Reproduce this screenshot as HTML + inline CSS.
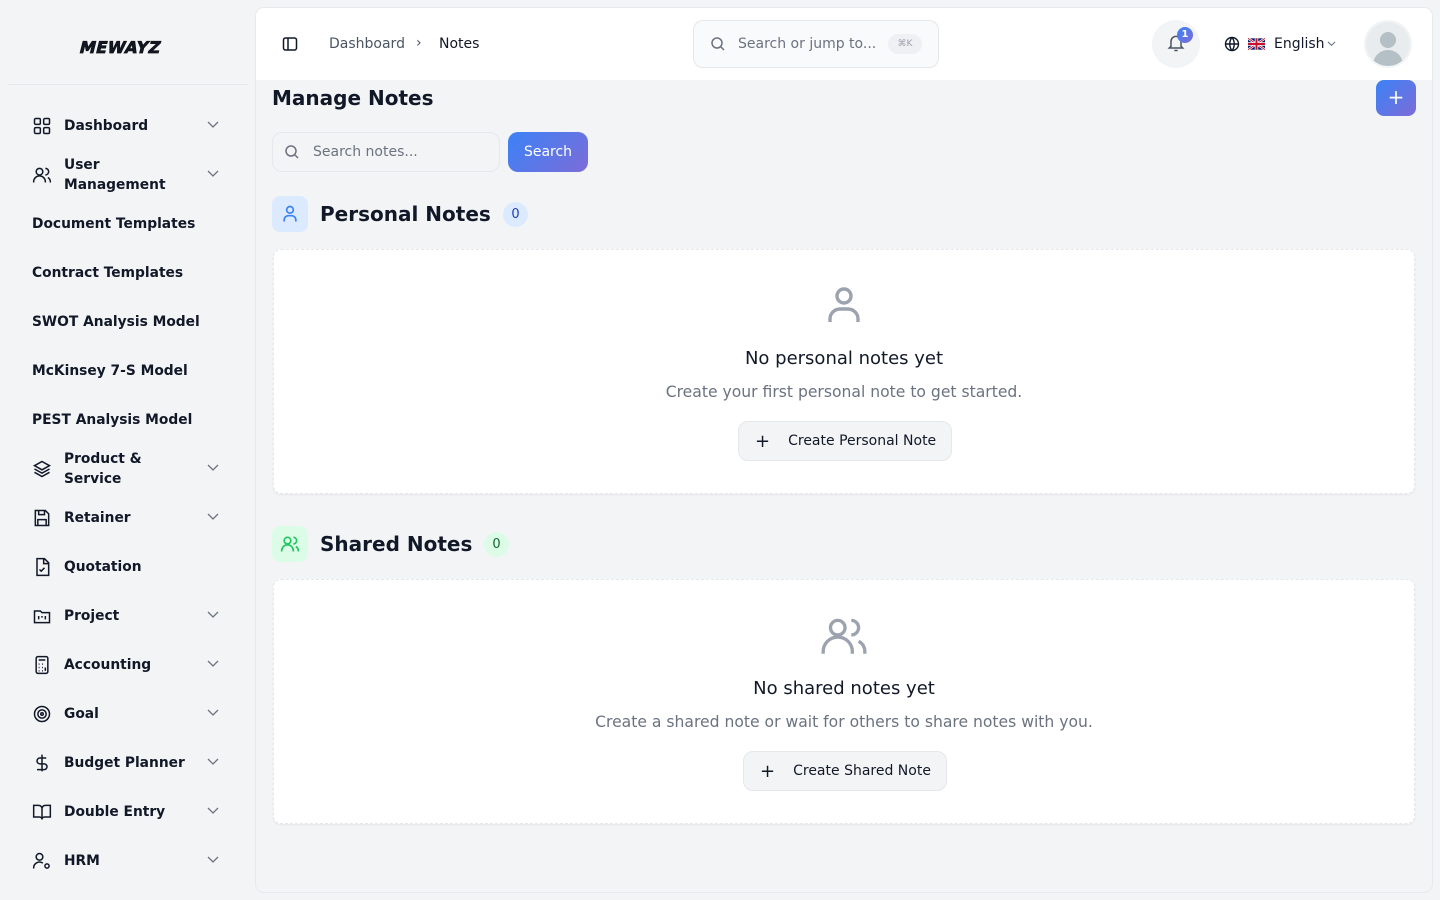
<!DOCTYPE html><html><head><meta charset="utf-8"><style>
*{box-sizing:border-box;margin:0;padding:0}
body{width:1440px;height:900px;background:#f3f4f6;font-family:"DejaVu Sans",sans-serif;color:#111827;position:relative;overflow:hidden}
.sb{position:absolute;left:0;top:0;width:256px;height:900px}
.logo{position:absolute;left:80px;top:38px;font:bold 16px "DejaVu Sans",sans-serif;letter-spacing:0.5px;transform:skewX(-14deg);-webkit-text-stroke:0.8px #111}
.hr{position:absolute;left:8px;top:84px;width:240px;height:1px;background:#e5e7eb}
.it{position:absolute;left:32px;font-size:13.8px;font-weight:bold;color:#111827;display:flex;align-items:center;line-height:20px}
.it svg{width:20px;height:20px;margin-right:12px;flex:none}
.chev{position:absolute;left:206px;width:14px;height:14px}
.main{position:absolute;left:256px;top:8px;width:1176px;height:884px;background:#f3f4f6;border-radius:8px;box-shadow:0 0 0 1px #e8e9ec}
.hdr{position:absolute;left:256px;top:8px;width:1176px;height:72px;background:#fff;border-radius:8px 8px 0 0}
.abs{position:absolute}
.card{position:absolute;left:273px;width:1142px;height:245px;background:#fff;border:1px dashed #e5e7eb;border-radius:8px;box-shadow:0 1px 2px rgba(0,0,0,.06)}
.ct{position:absolute;width:100%;text-align:center}
.btn{position:absolute;height:40px;border:1px solid #e5e7eb;background:#f3f4f6;border-radius:10px;font-size:14px;display:flex;align-items:center;padding-left:16px;color:#111827}
</style></head><body>
<div class="sb">
<div class="logo">MEWAYZ</div>
<div class="hr"></div>
<div class="it" style="top:116px"><svg viewBox="0 0 24 24" fill="none" stroke="#111827" stroke-width="1.8"><rect x="3" y="3" width="7" height="7" rx="1.5"/><rect x="14" y="3" width="7" height="7" rx="1.5"/><rect x="3" y="14" width="7" height="7" rx="1.5"/><rect x="14" y="14" width="7" height="7" rx="1.5"/></svg>Dashboard</div>
<div class="it" style="top:155px"><svg viewBox="0 0 24 24" fill="none" stroke="#111827" stroke-width="1.8"><circle cx="9" cy="8" r="4"/><path d="M2 21v-1a7 7 0 0114 0v1M16 4a4 4 0 010 8M22 21v-1a6 6 0 00-3-5"/></svg>User<br>Management</div>
<div class="it" style="top:214px">Document Templates</div>
<div class="it" style="top:263px">Contract Templates</div>
<div class="it" style="top:312px">SWOT Analysis Model</div>
<div class="it" style="top:361px">McKinsey 7-S Model</div>
<div class="it" style="top:410px">PEST Analysis Model</div>
<div class="it" style="top:449px"><svg viewBox="0 0 24 24" fill="none" stroke="#111827" stroke-width="1.8"><path d="M12 3l9 5-9 5-9-5z M3 12l9 5 9-5 M3 16l9 5 9-5"/></svg>Product &amp;<br>Service</div>
<div class="it" style="top:508px"><svg viewBox="0 0 24 24" fill="none" stroke="#111827" stroke-width="1.8"><path d="M5 3h11l4 4v14H4V3z M8 3v5h7V3 M7 21v-7h10v7"/></svg>Retainer</div>
<div class="it" style="top:557px"><svg viewBox="0 0 24 24" fill="none" stroke="#111827" stroke-width="1.8"><path d="M6 2h9l5 5v15H6z M14 2v6h6 M9 15l2 2 4-4"/></svg>Quotation</div>
<div class="it" style="top:606px"><svg viewBox="0 0 24 24" fill="none" stroke="#111827" stroke-width="1.8"><path d="M3 6h7l2 2h9v12H3z M8 12v4 M12 12v2 M16 12v4"/></svg>Project</div>
<div class="it" style="top:655px"><svg viewBox="0 0 24 24" fill="none" stroke="#111827" stroke-width="1.8"><rect x="5" y="2" width="14" height="20" rx="2"/><path d="M8 6h8M8 11h1M12 11h1M16 11h0M8 15h1M12 15h1M8 19h1M12 19h1M16 15v4"/></svg>Accounting</div>
<div class="it" style="top:704px"><svg viewBox="0 0 24 24" fill="none" stroke="#111827" stroke-width="1.8"><circle cx="12" cy="12" r="9"/><circle cx="12" cy="12" r="5"/><circle cx="12" cy="12" r="1.5"/></svg>Goal</div>
<div class="it" style="top:753px"><svg viewBox="0 0 24 24" fill="none" stroke="#111827" stroke-width="1.8"><path d="M12 2v20M17 6H9.5a3.5 3.5 0 000 7h5a3.5 3.5 0 010 7H6"/></svg>Budget Planner</div>
<div class="it" style="top:802px"><svg viewBox="0 0 24 24" fill="none" stroke="#111827" stroke-width="1.8"><path d="M2 4h6a4 4 0 014 4v13a3 3 0 00-3-3H2z M22 4h-6a4 4 0 00-4 4v13a3 3 0 013-3h7z"/></svg>Double Entry</div>
<div class="it" style="top:851px"><svg viewBox="0 0 24 24" fill="none" stroke="#111827" stroke-width="1.8"><circle cx="9" cy="7" r="4"/><path d="M2 21v-1a7 7 0 0111-5.5"/><circle cx="18" cy="18" r="2.5"/></svg>HRM</div>
<svg class="chev" style="top:117px" viewBox="0 0 14 14" fill="none" stroke="#6b7280" stroke-width="1.3"><path d="M2 5l5 5 5-5"/></svg>
<svg class="chev" style="top:166px" viewBox="0 0 14 14" fill="none" stroke="#6b7280" stroke-width="1.3"><path d="M2 5l5 5 5-5"/></svg>
<svg class="chev" style="top:460px" viewBox="0 0 14 14" fill="none" stroke="#6b7280" stroke-width="1.3"><path d="M2 5l5 5 5-5"/></svg>
<svg class="chev" style="top:509px" viewBox="0 0 14 14" fill="none" stroke="#6b7280" stroke-width="1.3"><path d="M2 5l5 5 5-5"/></svg>
<svg class="chev" style="top:607px" viewBox="0 0 14 14" fill="none" stroke="#6b7280" stroke-width="1.3"><path d="M2 5l5 5 5-5"/></svg>
<svg class="chev" style="top:656px" viewBox="0 0 14 14" fill="none" stroke="#6b7280" stroke-width="1.3"><path d="M2 5l5 5 5-5"/></svg>
<svg class="chev" style="top:705px" viewBox="0 0 14 14" fill="none" stroke="#6b7280" stroke-width="1.3"><path d="M2 5l5 5 5-5"/></svg>
<svg class="chev" style="top:754px" viewBox="0 0 14 14" fill="none" stroke="#6b7280" stroke-width="1.3"><path d="M2 5l5 5 5-5"/></svg>
<svg class="chev" style="top:803px" viewBox="0 0 14 14" fill="none" stroke="#6b7280" stroke-width="1.3"><path d="M2 5l5 5 5-5"/></svg>
<svg class="chev" style="top:852px" viewBox="0 0 14 14" fill="none" stroke="#6b7280" stroke-width="1.3"><path d="M2 5l5 5 5-5"/></svg>
</div>
<div class="main"></div>
<div class="hdr"></div>
<svg class="abs" style="left:282px;top:36px" width="16" height="16" viewBox="0 0 16 16" fill="none" stroke="#111827" stroke-width="1.5"><rect x="1.5" y="2" width="13" height="12" rx="2"/><path d="M6 2v12"/></svg>
<div class="abs" style="left:329px;top:36px;font-size:14px;color:#4b5563">Dashboard</div>
<div class="abs" style="left:416px;top:35px;font-size:14px;color:#4b5563">›</div>
<div class="abs" style="left:439px;top:36px;font-size:14px;color:#111827">Notes</div>
<div class="abs" style="left:693px;top:20px;width:246px;height:48px;border:1px solid #e5e7eb;border-radius:10px;background:#f9fafb"></div>
<svg class="abs" style="left:710px;top:36px" width="16" height="16" viewBox="0 0 16 16" fill="none" stroke="#6b7280" stroke-width="1.5"><circle cx="7" cy="7" r="5"/><path d="M11 11l3 3"/></svg>
<div class="abs" style="left:738px;top:36px;font-size:14px;color:#6b7280">Search or jump to...</div>
<div class="abs" style="left:888px;top:34px;width:34px;height:20px;border-radius:10px;background:#eef0f3;font-size:9px;color:#9ca3af;text-align:center;line-height:20px">⌘K</div>
<div class="abs" style="left:1152px;top:20px;width:48px;height:48px;border-radius:50%;background:#f3f4f6"></div>
<svg class="abs" style="left:1166px;top:33px" width="20" height="20" viewBox="0 0 24 24" fill="none" stroke="#4b5563" stroke-width="1.8"><path d="M6 16V10a6 6 0 0112 0v6l2 2H4z M10 21h4"/></svg>
<div class="abs" style="left:1177px;top:27px;width:16px;height:16px;border-radius:50%;background:linear-gradient(135deg,#3b82f6,#7c6cd8);color:#fff;font-size:10px;font-weight:bold;text-align:center;line-height:16px">1</div>
<svg class="abs" style="left:1224px;top:36px" width="16" height="16" viewBox="0 0 16 16" fill="none" stroke="#111827" stroke-width="1.4"><circle cx="8" cy="8" r="6.5"/><path d="M1.5 8h13M8 1.5c-3 3.5-3 9.5 0 13M8 1.5c3 3.5 3 9.5 0 13"/></svg>
<svg class="abs" style="left:1248px;top:38px" width="17" height="12" viewBox="0 0 60 40"><rect width="60" height="40" fill="#012169"/><path d="M0 0L60 40M60 0L0 40" stroke="#fff" stroke-width="8"/><path d="M0 0L60 40M60 0L0 40" stroke="#C8102E" stroke-width="3"/><path d="M30 0v40M0 20h60" stroke="#fff" stroke-width="12"/><path d="M30 0v40M0 20h60" stroke="#C8102E" stroke-width="7"/></svg>
<div class="abs" style="left:1274px;top:36px;font-size:14px;color:#111827">English</div>
<svg class="abs" style="left:1326px;top:39px" width="11" height="10" viewBox="0 0 14 14" fill="none" stroke="#6b7280" stroke-width="1.5"><path d="M2 4l5 5 5-5"/></svg>
<div class="abs" style="left:1364px;top:20px;width:48px;height:48px;border-radius:50%;background:#e8ecee;border:2px solid #f3f4f6;overflow:hidden"><div class="abs" style="left:14px;top:10px;width:16px;height:16px;border-radius:50%;background:#b4c0c5"></div><div class="abs" style="left:7px;top:28px;width:30px;height:16px;border-radius:15px 15px 0 0;background:#b4c0c5"></div></div>
<div class="abs" style="left:272px;top:86px;font-size:20px;font-weight:bold">Manage Notes</div>
<div class="abs" style="left:1376px;top:80px;width:40px;height:36px;border-radius:8px;background:linear-gradient(135deg,#3b82f6,#7c6cd8);color:#fff;font-size:20px;text-align:center;line-height:34px">+</div>
<div class="abs" style="left:272px;top:132px;width:228px;height:40px;border:1px solid #e5e7eb;border-radius:10px;background:#f3f4f6"></div>
<svg class="abs" style="left:284px;top:144px" width="16" height="16" viewBox="0 0 16 16" fill="none" stroke="#6b7280" stroke-width="1.5"><circle cx="7" cy="7" r="5"/><path d="M11 11l3 3"/></svg>
<div class="abs" style="left:313px;top:144px;font-size:14px;color:#6b7280">Search notes...</div>
<div class="abs" style="left:508px;top:132px;width:80px;height:40px;border-radius:10px;background:linear-gradient(135deg,#3b82f6,#7c6cd8);color:#fff;font-size:14px;text-align:center;line-height:41px">Search</div>
<div class="abs" style="left:272px;top:196px;width:36px;height:36px;border-radius:8px;background:#dbeafe"></div>
<svg class="abs" style="left:280px;top:204px" width="20" height="20" viewBox="0 0 24 24" fill="none" stroke="#3b82f6" stroke-width="2"><circle cx="12" cy="7" r="4"/><path d="M5 21v-2a5 5 0 015-5h4a5 5 0 015 5v2"/></svg>
<div class="abs" style="left:320px;top:202px;font-size:20px;font-weight:bold">Personal Notes</div>
<div class="abs" style="left:503px;top:202px;width:25px;height:25px;border-radius:50%;background:#dbeafe;color:#1e40af;font-size:13px;text-align:center;line-height:25px">0</div>
<div class="card" style="top:249px">
<svg class="abs" style="left:546px;top:32px" width="48" height="48" viewBox="0 0 24 24" fill="none" stroke="#9ca3af" stroke-width="1.7"><circle cx="12" cy="7" r="3.5"/><path d="M5 20v-1.5a5 5 0 015-5h4a5 5 0 015 5V20"/></svg>
<div class="ct" style="top:98px;font-size:18px">No personal notes yet</div>
<div class="ct" style="top:133px;font-size:15.6px;color:#6b7280">Create your first personal note to get started.</div>
<div class="btn" style="left:464px;top:171px;width:214px"><span style="font-size:18px;margin-right:18px">+</span>Create Personal Note</div>
</div>
<div class="abs" style="left:272px;top:526px;width:36px;height:36px;border-radius:8px;background:#dcfce7"></div>
<svg class="abs" style="left:280px;top:534px" width="20" height="20" viewBox="0 0 24 24" fill="none" stroke="#22c55e" stroke-width="2"><circle cx="9" cy="8" r="4"/><path d="M2 21v-1a7 7 0 0114 0v1M16 4a4 4 0 010 8M22 21v-1a6 6 0 00-3-5"/></svg>
<div class="abs" style="left:320px;top:532px;font-size:20px;font-weight:bold">Shared Notes</div>
<div class="abs" style="left:484px;top:532px;width:25px;height:25px;border-radius:50%;background:#dcfce7;color:#166534;font-size:13px;text-align:center;line-height:25px">0</div>
<div class="card" style="top:579px">
<svg class="abs" style="left:545px;top:31px" width="50" height="50" viewBox="0 0 24 24" fill="none" stroke="#9ca3af" stroke-width="1.6"><circle cx="9" cy="8" r="3.5"/><path d="M2 20.5v-1a6 6 0 0114 0v1M15.5 4.5a3.5 3.5 0 010 7M22 20.5v-1a5.5 5.5 0 00-3-5"/></svg>
<div class="ct" style="top:98px;font-size:18px">No shared notes yet</div>
<div class="ct" style="top:133px;font-size:15.6px;color:#6b7280">Create a shared note or wait for others to share notes with you.</div>
<div class="btn" style="left:469px;top:171px;width:204px"><span style="font-size:18px;margin-right:18px">+</span>Create Shared Note</div>
</div>
</body></html>
